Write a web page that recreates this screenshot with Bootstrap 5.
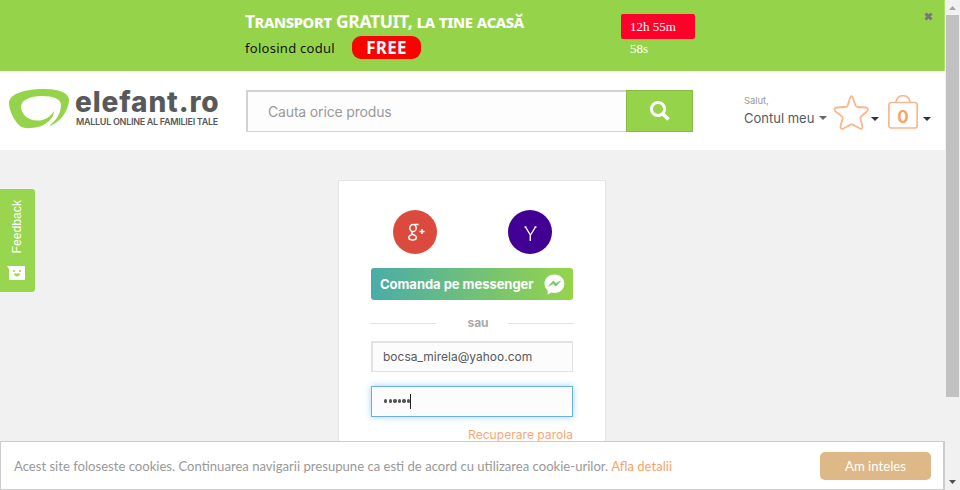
<!DOCTYPE html>
<html lang="ro">
<head>
<meta charset="utf-8">
<meta name="viewport" content="width=device-width, initial-scale=1">
<title>elefant.ro</title>
<link href="https://cdn.jsdelivr.net/npm/bootstrap@5.3.0/dist/css/bootstrap.min.css" rel="stylesheet">
<style>
body{height:490px;overflow:hidden;background:#f1f1f1;font-family:Inter,"Open Sans",sans-serif;color:#58595b}
svg{display:block;flex:none}
.page-area{width:945px;height:490px}
.promo{height:71px;background:#95d44a;padding-left:245px;border-right:1px solid #aee070}
.promo-text{width:376px;padding-top:9px;font-family:"Noto Sans",sans-serif}
.promo-title{font-size:17.5px;line-height:25px;font-weight:700;font-variant:small-caps;color:#fff;white-space:nowrap;letter-spacing:-.33px}
.promo-code{height:24px;font-size:13px;line-height:28px;color:#111;letter-spacing:.28px}
.free{width:69px;height:23px;margin:2px 0 0 17px;border-radius:9px;background:#f00;color:#fff;font-size:17px;line-height:23px;font-weight:700;letter-spacing:.2px;text-align:center}
.timer{width:74px;height:25px;margin-top:14px;padding:2px 9px;border-radius:2px;background:#ff002b;color:#fff;font:13px/22px "Liberation Serif",serif}
.closer{margin:12px 11px 0 auto}
.topbar{height:79px;background:#fff}
.brand{width:246px;padding:18px 0 0 9px}
.brand-name{font-size:28px;line-height:26px;margin-left:-3px;font-weight:800;letter-spacing:.9px;color:#58595b;height:28px}
.brand-tag{font-size:9px;line-height:9px;font-weight:600;letter-spacing:-.29px;white-space:nowrap;margin:0 0 0 -2px}
.search{width:447px;height:43px;margin-top:19px}
.search .form-control{border:1px solid #d2d2d2;border-top-width:2px;border-left-width:2px;border-right:0;border-radius:0;background:#fdfdfd;padding:0 20px 0;font-size:14px;letter-spacing:-.16px;height:42px}
.search .form-control::placeholder{color:#999;opacity:1}
.search-btn{flex:none;width:67px;height:42px;border:1px solid #86bd43;border-radius:0;background:#95d44a;padding:0 0 0 22px}
.account{width:83px;margin-left:51px;padding-top:24px;white-space:nowrap}
.hello{font-size:9.5px;line-height:12px;color:#999;letter-spacing:-.1px}
.caret{width:0;border:4px solid transparent;border-top-color:#333;border-bottom:0}
.caret-soft{border-top-color:#666}
.caret-low{margin-top:22px}
.acc-name{font-size:13px;line-height:22px}
.bag{width:30px;height:34px;margin-left:9px;margin-right:5px}
.bag span{position:absolute;left:0;right:0;top:10px;text-align:center;font-size:17px;line-height:24px;font-weight:700;color:#fba26c}
.feedback{width:35px;height:103px;margin-top:39px;border-radius:0 3px 3px 0;background:#98d64f;padding:11px 2px 12px 0}
.feedback span{writing-mode:vertical-rl;transform:rotate(180deg);color:#fff;font:12.2px/18px "Liberation Sans",sans-serif}
.login{width:268px;height:310px;margin:30px 0 0 303px;padding:28px 32px 0;border:1px solid #e4e4e4;background:#fff}
.social{height:46px;padding:0 20px 0 21px}
.msgr{height:32px;margin-top:13px;padding:0 8px 0 9px;border-radius:3px;background:linear-gradient(90deg,#4aaca8,#95d44a);color:#fff;font-size:13px;font-weight:700;letter-spacing:-.03px;line-height:33px;white-space:nowrap}
.or-row{height:41px;padding-top:5px;font-size:12px;font-weight:700;color:#aaa}
.or-row i{width:65px;height:1px;background:#e3e3e3}
.or-row span{padding-left:12px}
.field{height:31px;padding:0 10px 1px;border:1px solid #e2e2e2;border-top-width:2px;border-left-width:2px;border-radius:0;background:#fcfcfc;font-size:12px;color:#58595b}
.field.active{margin-top:14px;border:1px solid #66afe9;box-shadow:0 0 7px #a9d3f5;padding-left:12px}
.dots i{width:3.4px;height:3.4px;border-radius:50%;background:#555;margin-right:1.2px}
.cursor{width:1px;height:15px;background:#222;margin-left:-1px}
.recover{margin:10px 0 0;font-size:12.1px;line-height:16px;color:#fba774;text-align:right;white-space:nowrap}
.cookies{position:absolute;left:0;bottom:0;width:945px;height:49px;padding:0 12px 0 13px;border:1px solid #ccc;border-right-width:2px;background:#fff;font:13.1px/20px Lato,sans-serif;color:#999;white-space:nowrap}
.cookies a{color:#fba26c;text-decoration:none}
.agree{width:111px;height:28px;border:0;border-radius:5px;background:#deb887;color:#fff;padding:0;font:13.2px/28px Lato,sans-serif}
.scroller{width:15px;height:490px;background:#f1f1f1}
.thumb{width:13px;height:382px;margin-left:1px;background:#c1c1c1}
</style>
<script src="https://cdn.jsdelivr.net/npm/bootstrap@5.3.0/dist/js/bootstrap.bundle.min.js"></script>
</head>
<body class="d-flex">
<div class="page-area position-relative overflow-hidden">
  <section class="promo d-flex align-items-start">
    <div class="promo-text">
      <div class="promo-title">Transport GRATUIT, la tine acasă</div>
      <div class="promo-code d-flex"><span>folosind codul</span><span class="free">FREE</span></div>
    </div>
    <div class="timer">12h 55m 58s</div>
    <svg class="closer" width="9" height="9" viewBox="0 0 9 9"><path d="M1.5 1.5l6 6M7.5 1.5l-6 6" stroke="#777" stroke-width="3"/></svg>
  </section>
  <header class="topbar d-flex align-items-start">
    <div class="brand d-flex">
      <svg width="61" height="40" viewBox="0 0 61 40"><path fill="#95d44a" d="M41 37C52 33 60 20 60 11C60 3 48 0 34 0C16 0 0 5 0 14C0 22 6 33 11 37C16 41 30 39 36 35C41 32 45 27 45 22C42 27 37 31 30 31.500C18 32 12 24 12 18C12 11 21 7 33 7C44 7 52 10 52 16C52 24 47 32 41 36Z"/></svg>
      <div class="ms-1 ps-1"><div class="brand-name">elefant.ro</div><div class="brand-tag">MALLUL ONLINE AL FAMILIEI TALE</div></div>
    </div>
    <div class="search d-flex">
      <input class="form-control" placeholder="Cauta orice produs">
      <button class="btn search-btn"><svg width="22" height="22" viewBox="0 0 22 22" fill="none" stroke="#fff"><circle cx="9" cy="9" r="6.6" stroke-width="3"/><path d="M13.5 13.5l6 6" stroke-width="3.6"/></svg></button>
    </div>
    <div class="account">
      <div class="hello">Salut,</div>
      <div class="acc-name d-flex align-items-center justify-content-between"><span>Contul meu</span><span class="caret caret-soft"></span></div>
    </div>
    <div class="d-flex align-items-start pt-4">
      <svg class="ms-1" width="40" height="36" viewBox="-1 0 40 36"><path d="M15.6 10.8L18 3Q19.500-.5 21 3L23.600 10.800Q24 12 26 12L34 12.500Q37.500 13.500 35 16.500L29 21.500Q28 22.500 28.500 24L30.500 31.500Q30.500 35 27 33L20.500 29.600Q19.500 29 18.500 29.600L12 33.300Q8 35 8.500 31L10.500 24Q11 22 9.500 21L3.500 16.500Q1 13 5 12.500L13 12Q15 12 15.600 10.800Z" fill="none" stroke="#fbb68d" stroke-width="1.8"/></svg>
      <span class="caret caret-low"></span>
      <div class="bag position-relative"><svg width="30" height="34" viewBox="0 0 30 34" fill="none" stroke="#fbb68d" stroke-width="1.7"><rect x=".8" y="7.500" width="28.400" height="25.500" rx="2.500"/><path d="M8 7.500C8-1.500 22-1.500 22 7.500"/></svg><span>0</span></div>
      <span class="caret caret-low"></span>
    </div>
  </header>
  <main class="d-flex align-items-start">
    <div class="feedback d-flex flex-column align-items-center justify-content-between">
      <span>Feedback</span>
      <svg width="19" height="14" viewBox="0 0 19 14"><path d="M0 0H17Q18 0 18 1V13Q18 14 17 14H3Q2 14 2 13V3Z" fill="#fff"/><path d="M6 5h2M12 5h2" stroke="#98d64f" stroke-width="1.300"/><path d="M7 8Q10 12 13 8Z" fill="#98d64f" stroke="#98d64f"/></svg>
    </div>
    <section class="login">
      <div class="social d-flex justify-content-between">
        <svg width="46" height="46" viewBox="0 0 46 46"><circle cx="23" cy="23" r="22" fill="#dc4a3d"/><g fill="none" stroke="#fff" stroke-width="1.500"><ellipse cx="21" cy="19" rx="3.200" ry="3.600"/><path d="M22.500 15.500h4M21 22.500q-2.500 1.800 0 3q4.500 1.500 3 4.300q-3 2.400-6.800.2q-1.500-3 2.500-4.300M27.500 22.500h5M30 20v5"/></g></svg>
        <svg width="46" height="46" viewBox="0 0 46 46"><circle cx="23" cy="23" r="22" fill="#410093"/><path d="M18.500 18l4.800 8V32M28.500 18l-5 8M17.500 18h2M27.500 18h2" fill="none" stroke="#fff" stroke-width="1.400"/></svg>
      </div>
      <div class="msgr d-flex align-items-center justify-content-between"><span>Comanda pe messenger</span><svg width="21" height="21" viewBox="0 0 21 21"><path d="M10.500.5C4.500.5.500 4.700.5 9.800c0 2.800 1.300 5 3.200 6.800V20.500l3.700-2q8.600 2 12-4.700C22.500 7 17.500.5 10.500.5" fill="#fff"/><path d="M4.500 12.200L9.300 7l2.600 2.500L16.500 7l-4.800 5.200-2.500-2.600Z" fill="#78c66c" stroke="#78c66c" stroke-width=".8"/></svg></div>
      <div class="or-row d-flex align-items-center justify-content-between"><i></i><span>sau</span><i></i></div>
      <div class="field d-flex align-items-center">bocsa_mirela@yahoo.com</div>
      <div class="field active d-flex align-items-center"><span class="dots d-flex"><i></i><i></i><i></i><i></i><i></i><i></i></span><span class="cursor"></span></div>
      <div class="recover">Recuperare parola</div>
    </section>
  </main>
  <div class="cookies d-flex align-items-center justify-content-between"><span>Acest site foloseste cookies. Continuarea navigarii presupune ca esti de acord cu utilizarea cookie-urilor. <a href="#">Afla detalii</a></span><button class="agree">Am inteles</button></div>
</div>
<aside class="scroller d-flex flex-column">
  <svg width="15" height="15" viewBox="0 0 15 15"><path d="M4 10L7.500 6L11 10Z" fill="#a3a3a3"/></svg>
  <div class="thumb"></div>
  <svg class="mt-auto" width="15" height="15" viewBox="0 0 15 15"><path d="M4 5L7.500 9L11 5Z" fill="#505050"/></svg>
</aside>
</body>
</html>
